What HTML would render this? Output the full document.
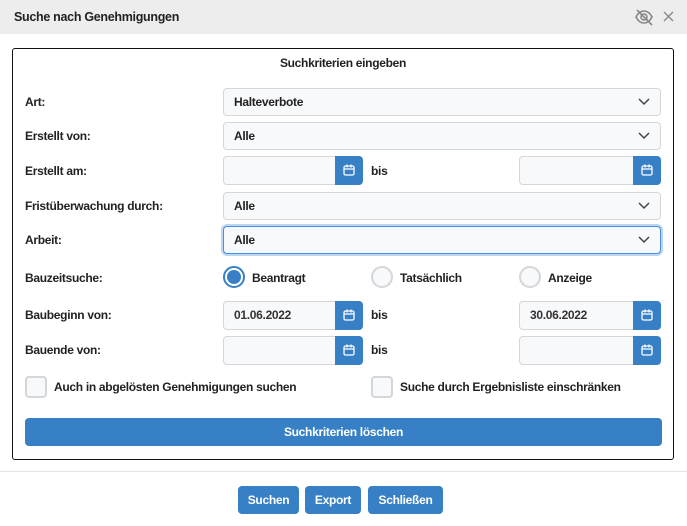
<!DOCTYPE html>
<html><head><meta charset="utf-8"><style>
*{box-sizing:border-box;margin:0;padding:0}
body{width:687px;height:526px;background:#fff;font-family:"Liberation Sans",sans-serif;font-weight:bold;font-size:12px;color:#222;position:relative;overflow:hidden;letter-spacing:-0.3px}
.a{position:absolute}
.hdr{left:0;top:0;width:687px;height:34px;background:#ededed}
.box{left:12px;top:48px;width:662px;height:412px;border:1px solid #111;border-radius:3px}
.lbl{left:25px;line-height:14px}
.sel{left:223px;width:438px;height:28px;border:1px solid #d4d6da;border-radius:4px;background:#f8f9fb;padding-left:10px;line-height:26px}
.sel svg{position:absolute;right:10px;top:9px}
.inp{height:29px;border:1px solid #d4d6da;border-radius:4px 0 0 4px;background:#f8f9fb;padding-left:10px;line-height:27px;color:#333}
.cal{width:28px;height:29px;background:#3780c6;border-radius:0 4px 4px 0}
.cal svg{position:absolute;left:8px;top:8px}
.rad{width:22px;height:22px;border-radius:50%;border:2px solid #d4d6da;background:#f8f9fb}
.chk{width:22px;height:22px;border-radius:4px;border:2px solid #d4d6da;background:#f8f9fb}
.btn{background:#3780c6;color:#fff;border-radius:4px;text-align:center;line-height:28px;height:28px}
</style></head><body>
<div class="a hdr"></div>
<div class="a" style="left:14px;top:10px;font-size:12.5px">Suche nach Genehmigungen</div>
<svg class="a" style="left:634px;top:8px" width="20" height="18" viewBox="0 0 20 18" fill="none" stroke="#888" stroke-width="1.6"><path d="M2 9c2-4 5-6 8-6s6 2 8 6c-2 4-5 6-8 6s-6-2-8-6z"/><circle cx="10" cy="9" r="3"/><path d="M3 2l15 15"/></svg>
<svg class="a" style="left:663px;top:11px" width="11" height="11" viewBox="0 0 11 11" stroke="#888" stroke-width="1.4"><path d="M1 1l9 9M10 1l-9 9"/></svg>
<div class="a box"></div>
<div class="a" style="left:12px;width:662px;top:56px;text-align:center">Suchkriterien eingeben</div>

<div class="a lbl" style="top:95px">Art:</div>
<div class="a sel" style="top:88px">Halteverbote<svg width="12" height="8" viewBox="0 0 12 8" fill="none" stroke="#444" stroke-width="1.5"><path d="M1 1l5 5 5-5"/></svg></div>
<div class="a lbl" style="top:129px">Erstellt von:</div>
<div class="a sel" style="top:122px">Alle<svg width="12" height="8" viewBox="0 0 12 8" fill="none" stroke="#444" stroke-width="1.5"><path d="M1 1l5 5 5-5"/></svg></div>

<div class="a lbl" style="top:164px">Erstellt am:</div>
<div class="a inp" style="left:223px;top:156px;width:113px"></div>
<div class="a cal" style="left:335px;top:156px"><svg width="12" height="12" viewBox="0 0 12 12" fill="none" stroke="#fff" stroke-width="1.3"><rect x="1" y="2" width="10" height="9" rx="1.5"/><path d="M1 5h10M4 0.5v3M8 0.5v3"/></svg></div>
<div class="a" style="left:371px;top:164px">bis</div>
<div class="a inp" style="left:519px;top:156px;width:115px"></div>
<div class="a cal" style="left:633px;top:156px"><svg width="12" height="12" viewBox="0 0 12 12" fill="none" stroke="#fff" stroke-width="1.3"><rect x="1" y="2" width="10" height="9" rx="1.5"/><path d="M1 5h10M4 0.5v3M8 0.5v3"/></svg></div>

<div class="a lbl" style="top:199px">Fristüberwachung durch:</div>
<div class="a sel" style="top:192px">Alle<svg width="12" height="8" viewBox="0 0 12 8" fill="none" stroke="#444" stroke-width="1.5"><path d="M1 1l5 5 5-5"/></svg></div>
<div class="a lbl" style="top:233px">Arbeit:</div>
<div class="a sel" style="top:226px;border:1px solid #4a90e2;box-shadow:0 0 0 2px #bcd6f5">Alle<svg width="12" height="8" viewBox="0 0 12 8" fill="none" stroke="#444" stroke-width="1.5"><path d="M1 1l5 5 5-5"/></svg></div>

<div class="a lbl" style="top:271px">Bauzeitsuche:</div>
<div class="a rad" style="left:223px;top:266px;border-color:#3780c6;background:#fff"><div class="a" style="left:2px;top:2px;width:14px;height:14px;border-radius:50%;background:#3780c6"></div></div>
<div class="a" style="left:252px;top:271px">Beantragt</div>
<div class="a rad" style="left:371px;top:266px"></div>
<div class="a" style="left:400px;top:271px">Tatsächlich</div>
<div class="a rad" style="left:519px;top:266px"></div>
<div class="a" style="left:548px;top:271px">Anzeige</div>

<div class="a lbl" style="top:308px">Baubeginn von:</div>
<div class="a inp" style="left:223px;top:301px;width:113px">01.06.2022</div>
<div class="a cal" style="left:335px;top:301px"><svg width="12" height="12" viewBox="0 0 12 12" fill="none" stroke="#fff" stroke-width="1.3"><rect x="1" y="2" width="10" height="9" rx="1.5"/><path d="M1 5h10M4 0.5v3M8 0.5v3"/></svg></div>
<div class="a" style="left:371px;top:308px">bis</div>
<div class="a inp" style="left:519px;top:301px;width:115px">30.06.2022</div>
<div class="a cal" style="left:633px;top:301px"><svg width="12" height="12" viewBox="0 0 12 12" fill="none" stroke="#fff" stroke-width="1.3"><rect x="1" y="2" width="10" height="9" rx="1.5"/><path d="M1 5h10M4 0.5v3M8 0.5v3"/></svg></div>

<div class="a lbl" style="top:343px">Bauende von:</div>
<div class="a inp" style="left:223px;top:336px;width:113px"></div>
<div class="a cal" style="left:335px;top:336px"><svg width="12" height="12" viewBox="0 0 12 12" fill="none" stroke="#fff" stroke-width="1.3"><rect x="1" y="2" width="10" height="9" rx="1.5"/><path d="M1 5h10M4 0.5v3M8 0.5v3"/></svg></div>
<div class="a" style="left:371px;top:343px">bis</div>
<div class="a inp" style="left:519px;top:336px;width:115px"></div>
<div class="a cal" style="left:633px;top:336px"><svg width="12" height="12" viewBox="0 0 12 12" fill="none" stroke="#fff" stroke-width="1.3"><rect x="1" y="2" width="10" height="9" rx="1.5"/><path d="M1 5h10M4 0.5v3M8 0.5v3"/></svg></div>

<div class="a chk" style="left:25px;top:376px"></div>
<div class="a" style="left:54px;top:380px">Auch in abgelösten Genehmigungen suchen</div>
<div class="a chk" style="left:371px;top:376px"></div>
<div class="a" style="left:400px;top:380px">Suche durch Ergebnisliste einschränken</div>

<div class="a btn" style="left:25px;top:418px;width:637px">Suchkriterien löschen</div>

<div class="a" style="left:0;top:471px;width:687px;height:1px;background:#e3e5e8"></div>
<div class="a btn" style="left:238px;top:486px;width:61px">Suchen</div>
<div class="a btn" style="left:305px;top:486px;width:56px">Export</div>
<div class="a btn" style="left:368px;top:486px;width:75px">Schließen</div>
</body></html>
